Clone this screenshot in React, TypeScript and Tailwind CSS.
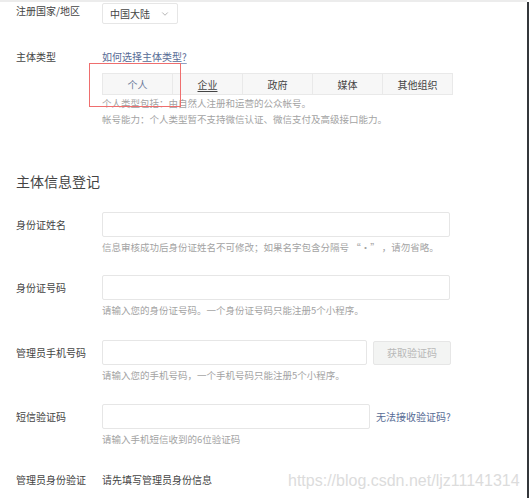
import { ChevronDown } from 'lucide-react'

const tabs = ['个人', '企业', '政府', '媒体', '其他组织']

function Label({ children }: { children: React.ReactNode }) {
  return <div className="w-[102px] shrink-0 pl-[16px] text-[10px] leading-[14px] text-[#444]">{children}</div>
}

function Hint({ children }: { children: React.ReactNode }) {
  return <p className="mt-[3px] pl-[102px] text-[9.5px] leading-[14px] text-[#a3a3a3]">{children}</p>
}

export default function App() {
  return (
    <div
      className="w-[529px] h-[498px] overflow-hidden bg-white flex flex-col"
      style={{ fontFamily: '"Noto Sans CJK SC", "Noto Sans", sans-serif' }}
    >
      <div className="h-[2px] w-[527px] bg-[#ececec] shrink-0" />
      <div className="flex flex-1 min-h-0">
        <div className="relative flex-1 flex flex-col">
          {/* country */}
          <div className="mt-[1px] flex items-start">
            <div className="pt-[1px]">
              <Label>注册国家/地区</Label>
            </div>
            <div className="h-[21px] w-[76px] border border-[#e6e6e6] rounded-[2px] flex items-center justify-between pl-[7px] pr-[7px]">
              <span className="text-[10px] text-[#444]">中国大陆</span>
              <ChevronDown className="w-[10px] h-[10px] text-[#888]" strokeWidth={1.5} />
            </div>
          </div>

          {/* type */}
          <div className="mt-[26px] flex items-start">
            <Label>主体类型</Label>
            <div className="relative flex flex-col">
              <a className="text-[10px] leading-[14px] text-[#576b95] underline decoration-[#8ea0c4] underline-offset-2">如何选择主体类型?</a>
              <div className="mt-[9px] flex w-[351px] h-[22px] border border-[#e9e9e9] bg-[#f7f7f7]">
                {tabs.map((t, i) => (
                  <div
                    key={t}
                    className={`flex-1 flex items-center justify-center text-[10px] ${i > 0 ? 'border-l border-[#e9e9e9]' : ''} ${i === 0 ? 'text-[#6b7a99]' : 'text-[#444]'} ${i === 1 ? 'underline underline-offset-2' : ''}`}
                  >
                    {t}
                  </div>
                ))}
              </div>
              <p className="text-[9.5px] leading-[16px] text-[#a3a3a3]">个人类型包括：由自然人注册和运营的公众帐号。</p>
              <p className="text-[9.5px] leading-[16px] text-[#a3a3a3]">帐号能力：个人类型暂不支持微信认证、微信支付及高级接口能力。</p>
              <div className="absolute left-[-13px] top-[13px] w-[92px] h-[44px] border border-[#ef6e6e]" />
            </div>
          </div>

          <h2 className="mt-[44px] pl-[16px] text-[14px] leading-[20px] text-[#444]">主体信息登记</h2>

          {/* name */}
          <div className="mt-[21px] flex items-center">
            <Label>身份证姓名</Label>
            <div className="h-[25px] w-[348px] border border-[#e6e6e6] rounded-[2px]" />
          </div>
          <Hint>信息审核成功后身份证姓名不可修改；如果名字包含分隔号 “·” ，请勿省略。</Hint>

          {/* id */}
          <div className="mt-[21px] flex items-center">
            <Label>身份证号码</Label>
            <div className="h-[25px] w-[348px] border border-[#e6e6e6] rounded-[2px]" />
          </div>
          <Hint>请输入您的身份证号码。一个身份证号码只能注册5个小程序。</Hint>

          {/* phone */}
          <div className="mt-[23px] flex items-center">
            <Label>管理员手机号码</Label>
            <div className="h-[25px] w-[265px] border border-[#e6e6e6] rounded-[2px]" />
            <button className="ml-[6px] h-[24px] w-[78px] border border-[#e6e6e6] rounded-[2px] bg-[#f3f4f3] text-[10px] text-[#b8b8b8]">
              获取验证码
            </button>
          </div>
          <Hint>请输入您的手机号码，一个手机号码只能注册5个小程序。</Hint>

          {/* sms */}
          <div className="mt-[22px] flex items-center">
            <Label>短信验证码</Label>
            <div className="h-[25px] w-[268px] border border-[#e6e6e6] rounded-[2px]" />
            <a className="ml-[6px] text-[10px] text-[#576b95]">无法接收验证码?</a>
          </div>
          <Hint>请输入手机短信收到的6位验证码</Hint>

          {/* admin */}
          <div className="mt-[27px] flex items-center">
            <Label>管理员身份验证</Label>
            <span className="text-[10px] leading-[14px] text-[#444]">请先填写管理员身份信息</span>
          </div>

          <div
            className="absolute left-[288px] top-[470px] text-[16px] leading-[18px] text-[#dcdcdc]"
            style={{ fontFamily: '"Liberation Sans", Arial, sans-serif' }}
          >
            https://blog.csdn.net/ljz11141314
          </div>
        </div>
        <div className="w-[2px] shrink-0 bg-[#34373b]" />
      </div>
    </div>
  )
}
